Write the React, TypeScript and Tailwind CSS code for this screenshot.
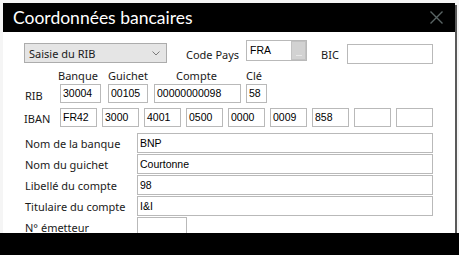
import React from "react";

const inputFont = "font-['Liberation_Sans',Arial,sans-serif]";

function Box({ w, h = 19, children, className = "" }: { w: string; h?: number; children?: React.ReactNode; className?: string }) {
  return (
    <div
      className={`${w} ${h === 20 ? "h-[20px]" : h === 21 ? "h-[21px]" : "h-[19px]"} shrink-0 border border-[#b9b9b9] bg-white pl-[2px] flex items-center text-[10.5px] leading-none text-black ${inputFont} ${className}`}
    >
      {children}
    </div>
  );
}

function LabelRow({ label, value, short }: { label: string; value?: string; short?: boolean }) {
  return (
    <div className="flex items-center h-[20px] shrink-0">
      <div className="w-[113px] pl-[1px] text-[11px] leading-none text-[#1a1a1a]">{label}</div>
      <Box w={short ? "w-[50px]" : "w-[296px]"} h={20}>
        {value}
      </Box>
    </div>
  );
}

export default function App() {
  const iban = ["FR42", "3000", "4001", "0500", "0000", "0009", "858", "", ""];
  return (
    <div className="w-[459px] h-[255px] bg-[#f5f5f5] overflow-hidden flex flex-col font-['Noto_Sans',sans-serif]">
      <div className="h-[233px] flex pt-[3px] pl-[3px] shrink-0">
        <div className="w-[452px] flex flex-col">
          <div className="h-[29px] bg-black flex items-center justify-between pl-[10px] pr-[12px] shrink-0">
            <span className="text-white text-[17.5px] leading-none font-['Lato',sans-serif]">Coordonnées bancaires</span>
            <svg width="13" height="13" viewBox="0 0 13 13">
              <path d="M0.5 0.5 L12.5 12.5 M12.5 0.5 L0.5 12.5" stroke="#5a6565" strokeWidth="1.4" />
            </svg>
          </div>
          <div className="flex-1 bg-white overflow-hidden pl-[21px] pt-[8px] flex flex-col">
            {/* Row 1 */}
            <div className="flex items-start h-[24px] shrink-0">
              <div className="mt-[3px] w-[143px] h-[20px] bg-[#e5e5e5] border border-[#acacac] flex items-center justify-between pl-[4px] pr-[6px] shrink-0">
                <span className="text-[11px] leading-none text-[#1a1a1a]">Saisie du RIB</span>
                <svg width="8" height="5" viewBox="0 0 8 5">
                  <path d="M0.5 0.5 L4 4 L7.5 0.5" stroke="#7a7a7a" strokeWidth="1" fill="none" />
                </svg>
              </div>
              <div className="ml-[19px] w-[60px] mt-[7px] text-[11px] leading-[16px] text-[#1a1a1a] shrink-0">Code Pays</div>
              <div className="w-[61px] h-[21px] border border-[#b9b9b9] bg-white flex items-stretch shrink-0">
                <div className={`flex-1 flex items-center pl-[3px] text-[10.5px] leading-none text-black ${inputFont}`}>FRA</div>
                <div className="w-[15px] bg-[#d2d2d2] border border-[#c2c2c2] flex items-end justify-center pb-[3px]">
                  <span className="block w-[6px] h-[1px] bg-[#e8e8e8]" />
                </div>
              </div>
              <div className="ml-[14px] w-[26px] mt-[7px] text-[11px] leading-[16px] text-[#1a1a1a] shrink-0">BIC</div>
              <Box w="w-[86px]" h={20} className="mt-[4px]" />
            </div>
            {/* Headers */}
            <div className="flex mt-[5px] pl-[34px] text-[11px] leading-[14px] text-[#1a1a1a] shrink-0">
              <div className="w-[50px]">Banque</div>
              <div className="w-[68px]">Guichet</div>
              <div className="w-[70px]">Compte</div>
              <div>Clé</div>
            </div>
            {/* RIB */}
            <div className="flex items-center mt-[1px] shrink-0">
              <div className="w-[36px] pl-[1px] pt-[3px] text-[11px] leading-none text-[#1a1a1a]">RIB</div>
              <Box w="w-[41px]">30004</Box>
              <Box w="w-[40px]" className="ml-[7px]">00105</Box>
              <Box w="w-[87px]" className="ml-[6px]">00000000098</Box>
              <Box w="w-[21px]" className="ml-[5px]">58</Box>
            </div>
            {/* IBAN */}
            <div className="flex items-center mt-[5px] shrink-0">
              <div className="w-[36px] pt-[1px] text-[11px] leading-none text-[#1a1a1a]">IBAN</div>
              <div className="flex gap-[5px]">
                {iban.map((v, i) => (
                  <Box key={i} w="w-[37px]">{v}</Box>
                ))}
              </div>
            </div>
            {/* Label rows */}
            <div className="flex flex-col gap-[1px] mt-[6px]">
              <LabelRow label="Nom de la banque" value="BNP" />
              <LabelRow label="Nom du guichet" value="Courtonne" />
              <LabelRow label="Libellé du compte" value="98" />
              <LabelRow label="Titulaire du compte" value="I&I" />
              <LabelRow label="N° émetteur" short />
            </div>
          </div>
        </div>
        <div className="w-[2px] mt-[2px] bg-[#5a5a5a] shrink-0" />
      </div>
      <div className="flex-1 bg-black" />
    </div>
  );
}
